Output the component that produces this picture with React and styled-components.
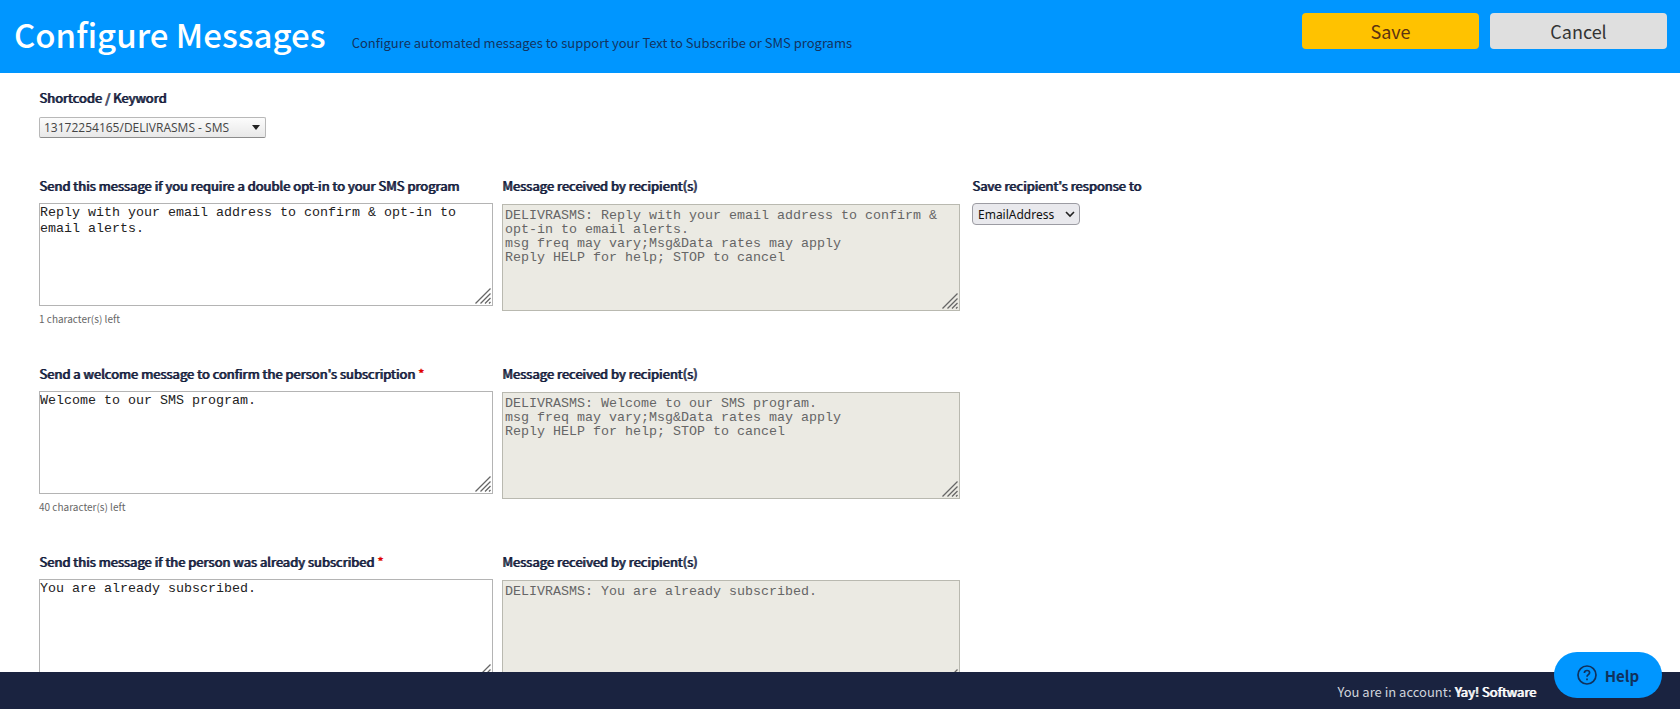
import React from 'react';
import styled, { createGlobalStyle } from 'styled-components';

const GlobalStyle = createGlobalStyle`
	*, *::before, *::after {
		box-sizing: border-box;
	}
	body {
		margin: 0;
		background: #fff;
		color: #14203d;
		font-family: "Noto Sans CJK SC", "Noto Sans", sans-serif;
		font-size: 13px;
		line-height: 20px;
	}
`;

const Page = styled.div`
	height: 100vh;
	display: flex;
	flex-direction: column;
`;

const Header = styled.header`
	flex: none;
	display: flex;
	align-items: flex-start;
	justify-content: space-between;
	gap: 20px;
	min-height: 73px;
	padding: 11px 13px 0 14px;
	background: #0096ff;
`;

const Heading = styled.div`
	display: flex;
	align-items: baseline;
	flex-wrap: wrap;
	gap: 0 26px;
`;

const Title = styled.h1`
	margin: 0;
	color: #fff;
	font-size: 33px;
	font-weight: 500;
	line-height: 46px;
`;

const Subtitle = styled.p`
	margin: 0;
	color: #12335f;
`;

const Actions = styled.div`
	flex: none;
	display: flex;
	gap: 11px;
	padding-top: 2px;
`;

const ActionButton = styled.button`
	width: 177px;
	height: 36px;
	padding: 0;
	border: 0;
	border-radius: 4px;
	background: ${props => (props.$primary ? '#ffc200' : '#dfdfdf')};
	color: ${props => (props.$primary ? '#5c3310' : '#333')};
	font-family: inherit;
	font-size: 18px;
	line-height: 36px;
	cursor: pointer;
`;

const Main = styled.main`
	flex: 1;
	min-height: 0;
	overflow-y: auto;
	scrollbar-width: none;
	padding: 15px 39px 0;
`;

const Label = styled.label`
	display: block;
	font-weight: 400;
	text-shadow: 1px 0 currentColor;
	white-space: nowrap;
`;

const Required = styled.span`
	color: #e00000;
`;

const KeywordField = styled.div`
	display: flex;
	flex-direction: column;
	align-items: flex-start;
	gap: 9px;
	margin-bottom: 38px;
`;

const SelectBox = styled.div`
	position: relative;
	display: inline-block;
	color: #222;

	svg {
		position: absolute;
		top: 0;
		right: 4px;
		height: 100%;
		pointer-events: none;
	}
`;

const KeywordSelect = styled.select`
	appearance: none;
	display: block;
	width: 227px;
	height: 21px;
	padding: 0 24px 0 4px;
	border: 1px solid #b8b8b8;
	border-bottom-color: #8c8c8c;
	border-radius: 2px;
	background: linear-gradient(#fcfcfc, #e8e8e8);
	color: #444;
	font-family: "Open Sans", "Noto Sans", sans-serif;
	font-size: 12px;
`;

const ResponseSelect = styled.select`
	appearance: none;
	display: block;
	width: 108px;
	height: 22px;
	padding: 0 20px 0 5px;
	border: 1px solid #9c9ca3;
	border-radius: 4px;
	background: #e9e9ed;
	color: #111;
	font-family: "Noto Sans", sans-serif;
	font-size: 12px;
`;

const MessageRow = styled.section`
	display: grid;
	grid-template-columns: minmax(0, 454px) minmax(0, 458px) auto;
	justify-content: start;
	column-gap: 9px;
	min-height: 188px;
`;

const Field = styled.div`
	display: flex;
	flex-direction: column;
	align-items: flex-start;
	gap: 7px;
	padding-left: ${props => (props.$indent ? '3px' : '0')};
`;

const AreaBox = styled.div`
	position: relative;
	width: 100%;
	padding-top: ${props => (props.$preview ? '1px' : '0')};

	svg {
		position: absolute;
		right: 2px;
		bottom: 2px;
		pointer-events: none;
	}
`;

const Area = styled.textarea`
	display: block;
	width: 100%;
	height: 103px;
	padding: 1px 0;
	border: 1px solid #b4b4b4;
	border-radius: 0;
	outline: 0;
	resize: none;
	overflow: hidden;
	background: #fff;
	color: #222;
	font-family: "Liberation Mono", "Courier New", monospace;
	line-height: 16px;
`;

const PreviewArea = styled(Area)`
	height: 107px;
	padding: 4px 2px;
	border-color: #b9b9b0;
	background: #ebeae3;
	color: #666;
	line-height: 14px;
`;

const Counter = styled.p`
	margin: -4px 0 0;
	color: #666;
	font-size: 10px;
`;

const Footer = styled.footer`
	position: relative;
	flex: none;
	display: flex;
	justify-content: flex-end;
	height: 37px;
	padding: 10px 144px 0 20px;
	background: #1a2340;
	color: #cfd3dc;

	strong {
		color: #fff;
		font-weight: 400;
		text-shadow: 1px 0 currentColor;
	}
`;

// floats over the footer edge
const HelpButton = styled.button`
	position: absolute;
	right: 18px;
	bottom: 11px;
	display: flex;
	align-items: center;
	justify-content: center;
	gap: 8px;
	width: 108px;
	height: 46px;
	padding: 0;
	border: 0;
	border-radius: 23px;
	background: #0096ff;
	color: #10315c;
	font-family: inherit;
	font-size: 15px;
	font-weight: 700;
	cursor: pointer;
`;

const messages = [
	{
		id: 'optin',
		label: 'Send this message if you require a double opt-in to your SMS program',
		text: 'Reply with your email address to confirm & opt-in to email alerts.',
		left: 1,
		preview: 'DELIVRASMS: Reply with your email address to confirm & opt-in to email alerts.\nmsg freq may vary;Msg&Data rates may apply\nReply HELP for help; STOP to cancel',
		saveTo: true
	},
	{
		id: 'welcome',
		label: "Send a welcome message to confirm the person's subscription",
		required: true,
		text: 'Welcome to our SMS program.',
		left: 40,
		preview: 'DELIVRASMS: Welcome to our SMS program.\nmsg freq may vary;Msg&Data rates may apply\nReply HELP for help; STOP to cancel'
	},
	{
		id: 'already',
		label: 'Send this message if the person was already subscribed',
		required: true,
		text: 'You are already subscribed.',
		preview: 'DELIVRASMS: You are already subscribed.'
	}
];

const Grip = () => (
	<svg width="16" height="16" viewBox="0 0 16 16" fill="none" stroke="#666" strokeWidth="1.3" aria-hidden="true">
		<path d="M0.5 15.5L15.5 0.5M5.5 15.5L15.5 5.5M10 15.5L15.5 10M14 15.5L15.5 14" />
	</svg>
);

const Message = ({ message }) => (
	<MessageRow>
		<Field>
			<Label htmlFor={message.id}>
				{message.label}
				{message.required && <Required> *</Required>}
			</Label>
			<AreaBox>
				<Area id={message.id} defaultValue={message.text} spellCheck={false} />
				<Grip />
			</AreaBox>
			{message.left && <Counter>{message.left} character(s) left</Counter>}
		</Field>
		<Field>
			<Label htmlFor={message.id + '-preview'}>Message received by recipient(s)</Label>
			<AreaBox $preview>
				<PreviewArea id={message.id + '-preview'} value={message.preview} readOnly />
				<Grip />
			</AreaBox>
		</Field>
		{message.saveTo && (
			<Field $indent>
				<Label htmlFor="save-to">Save recipient's response to</Label>
				<SelectBox>
					<ResponseSelect id="save-to">
						<option>EmailAddress</option>
					</ResponseSelect>
					<svg width="12" viewBox="0 0 12 22" fill="none" stroke="currentColor" strokeWidth="1.6" aria-hidden="true">
						<path d="M2 9L6 13L10 9" />
					</svg>
				</SelectBox>
			</Field>
		)}
	</MessageRow>
);

const App = () => (
	<Page>
		<GlobalStyle />
		<Header>
			<Heading>
				<Title>Configure Messages</Title>
				<Subtitle>Configure automated messages to support your Text to Subscribe or SMS programs</Subtitle>
			</Heading>
			<Actions>
				<ActionButton type="button" $primary>Save</ActionButton>
				<ActionButton type="button">Cancel</ActionButton>
			</Actions>
		</Header>
		<Main>
			<KeywordField>
				<Label htmlFor="keyword">Shortcode / Keyword</Label>
				<SelectBox>
					<KeywordSelect id="keyword">
						<option>13172254165/DELIVRASMS - SMS</option>
					</KeywordSelect>
					<svg width="12" viewBox="0 0 12 21" fill="currentColor" aria-hidden="true">
						<path d="M2 8H10L6 13Z" />
					</svg>
				</SelectBox>
			</KeywordField>
			{messages.map(message => (
				<Message key={message.id} message={message} />
			))}
		</Main>
		<Footer>
			<span>You are in account: <strong>Yay! Software</strong></span>
			<HelpButton type="button">
				<svg width="20" height="20" viewBox="0 0 20 20" fill="none" stroke="currentColor" strokeWidth="1.7" aria-hidden="true">
					<circle cx="10" cy="10" r="9" />
					<path d="M7.4 8C7.4 6.5 8.5 5.5 10 5.5C11.5 5.5 12.6 6.5 12.6 7.8C12.6 9.6 10 9.8 10 11.8" />
					<path d="M10 13.4V15.2" />
				</svg>
				Help
			</HelpButton>
		</Footer>
	</Page>
);

export default App;
